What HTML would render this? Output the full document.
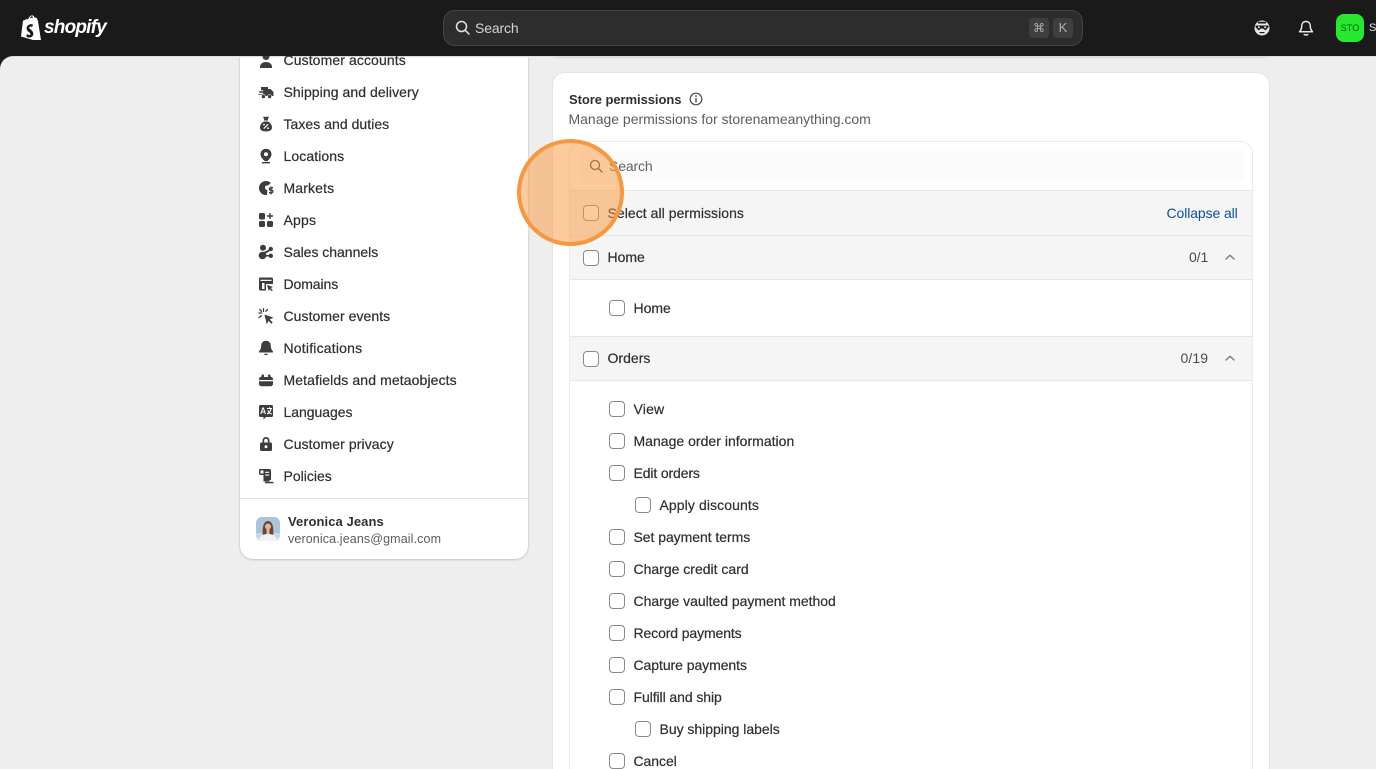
<!DOCTYPE html>
<html lang="en"><head><meta charset="utf-8"><title>Store permissions</title>
<style>
html,body{margin:0;padding:0;width:1376px;height:769px;overflow:hidden;background:#1a1a1a}
*{box-sizing:border-box}
body{font-family:"Liberation Sans",sans-serif;font-size:14px;color:#303030;position:relative}
.a{position:absolute}
.t{position:absolute;white-space:nowrap;line-height:18px;-webkit-text-stroke:.22px currentColor}
.nav{color:#303030}
.ic{position:absolute;left:258px;width:16px;height:16px;fill:#3d3d3d}
.cb{position:absolute;width:16px;height:16px;border:1px solid #8a8a8a;border-radius:4px;background:#fff}
.row{position:absolute;left:570px;width:682px;background:#f5f5f5;border-top:1px solid #e6e6e6;border-bottom:1px solid #e6e6e6}
</style></head><body>
<!-- page bg -->
<div class="a" style="left:0;top:56px;width:1376px;height:713px;background:#eee;border-top-left-radius:13px;border-top:1px solid #ddd"></div>

<!-- sidebar -->
<div class="a" style="left:240px;top:57px;width:288px;height:502px;background:#fff;border-radius:0 0 13px 13px;box-shadow:0 1px 2px rgba(0,0,0,.18),-1px 0 0 #e6e6e6,1px 0 0 #e6e6e6"></div>
<div class="a" style="left:240px;top:498px;width:288px;height:1px;background:#e3e3e3"></div>

<svg class="ic" style="top:53px" viewBox="0 0 16 16"><circle cx="8" cy="3.500" r="3.500"/><path d="M2 14c0-3 2.500-5 6-5s6 2 6 5v1H2Z"/></svg>
<div class="t nav" style="left:283.500px;top:51px;letter-spacing:.1px">Customer accounts</div>

<!-- top bar (sits above scrolled content) -->
<div class="a" style="left:0;top:0;width:1376px;height:56px;background:#1a1a1a"></div>
<svg class="a" style="left:20px;top:15px" width="22" height="25" viewBox="0 0 22 25"><path fill="#fff" d="M1 21.500 3 5.600 8.600 3.500C9.500 1.200 11 .2 12.400.4c1.300.2 2 1.400 2.200 2.400l1.500-.2 1 .9.9 2.600 3 19.200L14.800 25.500ZM9.800 3.200 13.100 2.500C12.800 1.500 12.100 1.200 11.700 1.300 10.900 1.500 10.300 2.200 9.800 3.200Z"/><path fill="#1a1a1a" d="M12.900 9.500 12.300 12c-.8-.4-3-.8-3.100.8-.1 1.700 4.300 2.200 4.100 6.300-.2 3.300-4.300 4.400-7 2.500l.6-2.600c.8.700 3.400 1.800 3.500.1.100-1.800-3.800-2-3.800-5.800.1-3.600 4.500-5 6.300-3.800Z"/></svg>
<div class="a" style="left:44px;top:14px;font:italic bold 19px/28px 'Liberation Sans',sans-serif;color:#fff;letter-spacing:-.8px;white-space:nowrap">shopify</div>
<!-- search -->
<div class="a" style="left:443px;top:10px;width:640px;height:36px;background:#2d2d2d;border:1px solid #454545;border-radius:12px"></div>
<svg class="a" style="left:455px;top:20px" width="15" height="15" viewBox="0 0 15 15" fill="none" stroke="#e3e3e3" stroke-width="1.500"><circle cx="6.500" cy="6.500" r="5"/><path d="m10.200 10.200 3.800 3.800" stroke-linecap="round"/></svg>
<div class="t" style="left:475px;top:19px;color:#d4d4d4;-webkit-text-stroke:0;letter-spacing:-.14px">Search</div>
<div class="a" style="left:1029px;top:18px;width:20px;height:20px;background:#3f3f3f;border-radius:4px;color:#b0b0b0;font-size:12px;line-height:20px;text-align:center;font-family:'DejaVu Sans',sans-serif">⌘</div>
<div class="a" style="left:1053px;top:18px;width:20px;height:20px;background:#3f3f3f;border-radius:4px;color:#b0b0b0;font-size:13px;line-height:20px;text-align:center">K</div>
<!-- right icons -->
<svg class="a" style="left:1254px;top:20px" width="16" height="16" viewBox="0 0 16 16"><circle cx="8" cy="8" r="7.500" fill="#e8e8e8"/><path fill="#1a1a1a" d="M1.500 5.500 14.500 5.500 14.500 7 11.500 10.500 9 8.500 7 8.500 4.500 10.500 1.500 7ZM4 1.800h8V3.500H4Z"/><circle cx="4.800" cy="7.300" r="1" fill="#e8e8e8"/><circle cx="11.200" cy="7.300" r="1" fill="#e8e8e8"/><path d="M5.500 12h5v1.200h-5Z" fill="#1a1a1a"/></svg>
<svg class="a" style="left:1298px;top:20px" width="16" height="17" viewBox="0 0 16 17" fill="none" stroke="#e8e8e8" stroke-width="1.500" stroke-linejoin="round"><path d="M8 1.500c-2.800 0-4.300 2-4.300 4.500 0 2.800-.7 3.800-2.200 5.800h13c-1.500-2-2.200-3-2.200-5.800 0-2.500-1.500-4.500-4.300-4.500Z"/><path d="M6 14c.4 1.300 3.600 1.300 4 0"/></svg>
<div class="a" style="left:1336px;top:14px;width:28px;height:28px;background:#25e82f;border-radius:8px;color:#0c5c14;font-size:9px;line-height:28px;text-align:center;letter-spacing:.1px">STO</div>
<div class="t" style="left:1369px;top:19px;color:#e3e3e3;font-size:11px;-webkit-text-stroke:0">ST</div>

<svg class="ic" style="top:84px" viewBox="0 0 16 16"><path d="M3 3h7v2h2.500L15.500 8v4h-1.700a2.400 2.400 0 0 0-4.500 0H7.600a2.400 2.400 0 0 0-4.400-.6V9.800h2V8.700H1.200V7.300h4V6.200H3Z"/><circle cx="5.400" cy="12.600" r="1.700"/><circle cx="11.600" cy="12.600" r="1.700"/><path d="M.5 10h2v1h-2Z"/></svg>
<div class="t nav" style="left:283.500px;top:83px;letter-spacing:.07px">Shipping and delivery</div>

<svg class="ic" style="top:116px" viewBox="0 0 16 16"><path d="M5 .8h6L9.800 3.500l.2 1H6l.2-1ZM6 5.500h4c2.500 1.400 4 3.600 4 6 0 2.600-2 3.900-6 3.900s-6-1.300-6-3.900c0-2.400 1.500-4.600 4-6Z"/><path stroke="#fff" stroke-width="1.100" d="m5.800 12.600 4.400-4.400"/><circle cx="6" cy="8.600" r=".9" fill="#fff"/><circle cx="10" cy="12.200" r=".9" fill="#fff"/></svg>
<div class="t nav" style="left:283.500px;top:115px;letter-spacing:.04px">Taxes and duties</div>

<svg class="ic" style="top:148px" viewBox="0 0 16 16"><path fill-rule="evenodd" d="M8 .8a5.500 5.500 0 0 1 5.500 5.500c0 2.800-2.500 5.300-4.200 6.900H7C5 11.600 2.500 9.100 2.500 6.300A5.500 5.500 0 0 1 8 .8Zm0 3.500a2 2 0 1 0 0 4 2 2 0 0 0 0-4Z"/><path d="M4 14h8v1.400H4Z"/></svg>
<div class="t nav" style="left:283.500px;top:147px;letter-spacing:.09px">Locations</div>

<svg class="ic" style="top:180px" viewBox="0 0 16 16"><path d="M8 1c2 0 3.600.8 4.800 2L10 5.500C8.500 5 7 6 7 7.500c0 1.700 1 2.400 2.300 2.700v1.600L9 15A7 7 0 0 1 1 8a7 7 0 0 1 7-7Z"/><path fill="none" stroke="#3d3d3d" stroke-width="1.300" d="M15 7.800h-2.300c-1.700 0-1.700 2.400 0 2.400h.8c1.800 0 1.800 2.500 0 2.500H11M13 6.500v8"/></svg>
<div class="t nav" style="left:283.500px;top:179px;letter-spacing:.14px">Markets</div>

<svg class="ic" style="top:212px" viewBox="0 0 16 16"><rect x="1" y="1" width="6" height="6.500" rx="1.500"/><rect x="1" y="9" width="6" height="6" rx="1.500"/><rect x="9" y="9" width="6" height="6" rx="1.500"/><path d="M11.300 1h1.400v2.300H15v1.400h-2.300V7h-1.400V4.700H9V3.300h2.300Z"/></svg>
<div class="t nav" style="left:283.500px;top:211px;letter-spacing:.19px">Apps</div>

<svg class="ic" style="top:244px" viewBox="0 0 16 16"><circle cx="5" cy="3.800" r="3"/><circle cx="4.500" cy="11.500" r="3.800"/><circle cx="12.800" cy="5" r="2.200"/><circle cx="12.800" cy="11.800" r="2.200"/><path d="M6 8 11 5.500l.8 1.500L7 10ZM7 11l4.500 0v1.500L7 12.500Z"/></svg>
<div class="t nav" style="left:283.500px;top:243px;letter-spacing:-.02px">Sales channels</div>

<svg class="ic" style="top:276px" viewBox="0 0 16 16"><path fill-rule="evenodd" d="M2.500 1.500h11A1.500 1.500 0 0 1 15 3v5H8v6.500H2.500A1.500 1.500 0 0 1 1 13V3a1.500 1.500 0 0 1 1.500-1.500ZM2.500 3.800V5h11V3.800ZM4 7v6h2.500V7Z"/><path d="M9 9l6 2-2.200 1 2 2.200-1 1-2-2.200-1 2.200Z"/></svg>
<div class="t nav" style="left:283.500px;top:275px;letter-spacing:-.09px">Domains</div>

<svg class="ic" style="top:308px" viewBox="0 0 16 16"><path d="M6.500 6.500l9 3.300-3.800 1.600 3 3-1.300 1.300-3-3-1.600 3.800Z"/><path fill="none" stroke="#3d3d3d" stroke-width="1.300" stroke-linecap="round" d="M5.500.8v2.700M1 5h2.700M1.800 1.500 3.500 3.300M9.500 1.500 7.800 3.300M1 9.500 3.300 7.800"/></svg>
<div class="t nav" style="left:283.500px;top:307px;letter-spacing:.06px">Customer events</div>

<svg class="ic" style="top:340px" viewBox="0 0 16 16"><path d="M8 .8c3 0 4.800 2.200 4.800 5 0 2.800 1 4 2.200 5.700.3.500 0 1-.6 1H1.600c-.6 0-.9-.5-.6-1C2.200 9.800 3.200 8.600 3.200 5.800c0-2.800 1.800-5 4.800-5Z"/><path d="M6 13.800h4c-.3 1.800-3.700 1.800-4 0Z"/></svg>
<div class="t nav" style="left:283.500px;top:339px;letter-spacing:.2px">Notifications</div>

<svg class="ic" style="top:372px" viewBox="0 0 16 16"><path d="M1 7.500A3 3 0 0 1 3.500 4.600V4A1.600 1.600 0 0 1 5.100 2.400 1 1 0 0 1 6 3.400V5h4V3.400a1 1 0 0 1 .9-1A1.600 1.600 0 0 1 12.500 4v.6A3 3 0 0 1 15 7.500V8H1ZM1 9.300h14V12a2.200 2.200 0 0 1-2.200 2.200H3.200A2.200 2.200 0 0 1 1 12Z"/></svg>
<div class="t nav" style="left:283.500px;top:371px;letter-spacing:.11px">Metafields and metaobjects</div>

<svg class="ic" style="top:404px" viewBox="0 0 16 16"><path d="M2.500 1h11A1.500 1.500 0 0 1 15 2.500v9a1.500 1.500 0 0 1-1.500 1.500H8l-2.500 2.500V13h-3A1.500 1.500 0 0 1 1 11.500v-9A1.500 1.500 0 0 1 2.500 1Z"/><path fill="none" stroke="#fff" stroke-width="1.100" d="m2.800 10 2-6h.6l2 6M3.600 8h3.200M9 4.500h5M11.500 3.200v1.300M13 4.500c-.3 2.500-1.700 4.500-4 5.500M9.800 6.500c.7 1.500 2 3 4 3.500"/></svg>
<div class="t nav" style="left:283.500px;top:403px;letter-spacing:-.03px">Languages</div>

<svg class="ic" style="top:436px" viewBox="0 0 16 16"><path fill-rule="evenodd" d="M4.500 6.500V4.500a3.500 3.500 0 0 1 7 0v2H12.500A1.500 1.500 0 0 1 14 8v5.500a1.500 1.500 0 0 1-1.500 1.500h-9A1.500 1.500 0 0 1 2 13.500V8a1.500 1.500 0 0 1 1.500-1.500ZM6.200 6.500h3.600v-2a1.800 1.800 0 0 0-3.600 0Z"/><circle cx="8" cy="10.700" r="1.500" fill="#fff"/></svg>
<div class="t nav" style="left:283.500px;top:435px;letter-spacing:.09px">Customer privacy</div>

<svg class="ic" style="top:468px" viewBox="0 0 16 16"><path fill-rule="evenodd" d="M2 1h9.500A1.500 1.500 0 0 1 13 2.500V12h-1.500v1.500h-6V7H3A2 2 0 0 1 1 5V2a1 1 0 0 1 1-1Zm.5 1.500v3h3v-3Z"/><path fill="#fff" d="M7.200 3.800h4v1.100h-4ZM7.200 6.500h4v1.100h-4Z"/><path d="M7 13.800h8.500v1.500H7Z"/></svg>
<div class="t nav" style="left:283.500px;top:467px;letter-spacing:0">Policies</div>

<!-- user -->
<svg class="a" style="left:256px;top:517px;border-radius:6px" width="24" height="24" viewBox="0 0 24 24"><rect width="24" height="24" fill="#a9c6dc"/><path d="M0 16h24v8H0Z" fill="#c8d8e8"/><path d="M7 19c-1-7 0-15 5-15s6 8 5 15Z" fill="#6b4636"/><circle cx="12" cy="9.500" r="3" fill="#e3b49c"/><path d="M3 24c.5-5 4-7 9-7s8.500 2 9 7Z" fill="#f2f2f4"/><path d="M10.500 12h3v5h-3Z" fill="#e3b49c"/></svg>
<div class="t" style="left:288px;top:513px;font-size:13px;font-weight:bold;-webkit-text-stroke:0;color:#303030;letter-spacing:.08px">Veronica Jeans</div>
<div class="t" style="left:288px;top:530px;font-size:12.500px;color:#5c5c5c;-webkit-text-stroke:0;letter-spacing:.12px">veronica.jeans@gmail.com</div>

<!-- main -->
<div class="a" style="left:553px;top:56px;width:714px;height:2px;background:#dcdcdc;border-radius:0 0 6px 6px"></div>
<div class="a" style="left:552px;top:72px;width:718px;height:720px;background:#fff;border:1px solid #e3e3e3;border-radius:13px"></div>

<div class="t" style="left:569px;top:91px;font-size:13px;font-weight:bold;-webkit-text-stroke:0;letter-spacing:-.06px">Store permissions</div>
<svg class="a" style="left:689px;top:92px" width="14" height="14" viewBox="0 0 14 14" fill="none" stroke="#4a4a4a" stroke-width="1.200"><circle cx="7" cy="7" r="5.800"/><path d="M7 6.200v4" stroke-width="1.400"/><circle cx="7" cy="4.100" r=".6" fill="#4a4a4a" stroke-width=".6"/></svg>
<div class="t" style="left:568.500px;top:110px;color:#5c5c5c;-webkit-text-stroke:0;letter-spacing:-.01px">Manage permissions for storenameanything.com</div>

<!-- inner box -->
<div class="a" style="left:569px;top:141px;width:684px;height:640px;border:1px solid #ebebeb;border-radius:13px 13px 0 0;background:#fff"></div>
<div class="a" style="left:578px;top:149px;width:666px;height:34px;background:#fbfbfb;border-radius:8px"></div>
<svg class="a" style="left:589px;top:159px" width="14" height="14" viewBox="0 0 14 14" fill="none" stroke="#4a4a4a" stroke-width="1.300"><circle cx="6" cy="6" r="4.500"/><path d="m9.500 9.500 3.500 3.500" stroke-linecap="round"/></svg>
<div class="t" style="left:609px;top:157px;color:#616161;-webkit-text-stroke:0;letter-spacing:-.15px">Search</div>

<div class="row" style="top:190px;height:46px;border-bottom:1px solid #e6e6e6"></div>
<div class="cb" style="left:583px;top:205px"></div>
<div class="t" style="left:607.500px;top:204px;letter-spacing:.05px">Select all permissions</div>
<div class="t" style="left:1166.500px;top:204px;-webkit-text-stroke:0;color:#0a4fa8;letter-spacing:-.1px">Collapse all</div>

<div class="row" style="top:235px;height:45px"></div>
<div class="cb" style="left:583px;top:250px"></div>
<div class="t" style="left:607.500px;top:248px;letter-spacing:0">Home</div>
<div class="t" style="left:1189px;top:248px;color:#4a4a4a;-webkit-text-stroke:0;letter-spacing:-.1px">0/1</div>
<svg class="a" style="left:1224px;top:253px" width="12" height="8" viewBox="0 0 12 8" fill="none" stroke="#7a7a7a" stroke-width="1.400" stroke-linecap="round" stroke-linejoin="round"><path d="M2 6 6 2.200 10 6"/></svg>

<div class="cb" style="left:609px;top:300px"></div>
<div class="t" style="left:633.500px;top:299px;letter-spacing:0">Home</div>

<div class="row" style="top:336px;height:45px"></div>
<div class="cb" style="left:583px;top:351px"></div>
<div class="t" style="left:607.500px;top:349px;letter-spacing:.02px">Orders</div>
<div class="t" style="left:1180.500px;top:349px;color:#4a4a4a;-webkit-text-stroke:0;letter-spacing:.1px">0/19</div>
<svg class="a" style="left:1224px;top:354px" width="12" height="8" viewBox="0 0 12 8" fill="none" stroke="#7a7a7a" stroke-width="1.400" stroke-linecap="round" stroke-linejoin="round"><path d="M2 6 6 2.200 10 6"/></svg>

<div class="cb" style="left:609px;top:401px"></div><div class="t" style="left:633.500px;top:400px;letter-spacing:.19px">View</div>
<div class="cb" style="left:609px;top:433px"></div><div class="t" style="left:633.500px;top:432px;letter-spacing:.02px">Manage order information</div>
<div class="cb" style="left:609px;top:465px"></div><div class="t" style="left:633.500px;top:464px;letter-spacing:-.13px">Edit orders</div>
<div class="cb" style="left:635px;top:497px"></div><div class="t" style="left:659.500px;top:496px;letter-spacing:.09px">Apply discounts</div>
<div class="cb" style="left:609px;top:529px"></div><div class="t" style="left:633.500px;top:528px;letter-spacing:-.05px">Set payment terms</div>
<div class="cb" style="left:609px;top:561px"></div><div class="t" style="left:633.500px;top:560px;letter-spacing:0">Charge credit card</div>
<div class="cb" style="left:609px;top:593px"></div><div class="t" style="left:633.500px;top:592px;letter-spacing:-.03px">Charge vaulted payment method</div>
<div class="cb" style="left:609px;top:625px"></div><div class="t" style="left:633.500px;top:624px;letter-spacing:-.11px">Record payments</div>
<div class="cb" style="left:609px;top:657px"></div><div class="t" style="left:633.500px;top:656px;letter-spacing:-.06px">Capture payments</div>
<div class="cb" style="left:609px;top:689px"></div><div class="t" style="left:633.500px;top:688px;letter-spacing:-.08px">Fulfill and ship</div>
<div class="cb" style="left:635px;top:721px"></div><div class="t" style="left:659.500px;top:720px;letter-spacing:-.02px">Buy shipping labels</div>
<div class="cb" style="left:609px;top:753px"></div><div class="t" style="left:633.500px;top:752px;letter-spacing:-.06px">Cancel</div>

<!-- highlight -->
<div class="a" style="left:517px;top:139px;width:107px;height:107px;border-radius:50%;background:rgba(250,150,60,.5);border:4px solid #f7973f"></div>
</body></html>
